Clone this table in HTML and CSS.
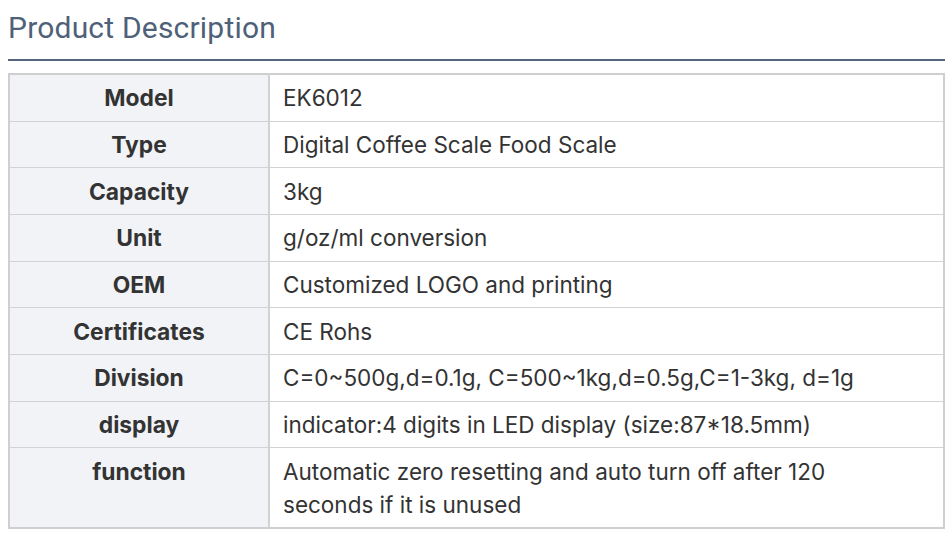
FILE: index.html
```html
<!DOCTYPE html>
<html>
<head>
<meta charset="utf-8">
<link rel="stylesheet" href="styles.css">
</head>
<body>
<div class="wrap">
  <h2 class="title">Product Description</h2>
  <table class="spec">
    <tr><th>Model</th><td>EK6012</td></tr>
    <tr><th>Type</th><td>Digital Coffee Scale Food Scale</td></tr>
    <tr><th>Capacity</th><td>3kg</td></tr>
    <tr><th>Unit</th><td>g/oz/ml conversion</td></tr>
    <tr><th>OEM</th><td>Customized LOGO and printing</td></tr>
    <tr><th>Certificates</th><td>CE Rohs</td></tr>
    <tr><th>Division</th><td>C=0~500g,d=0.1g, C=500~1kg,d=0.5g,C=1-3kg, d=1g</td></tr>
    <tr><th>display</th><td>indicator:4 digits in LED display (size:87*18.5mm)</td></tr>
    <tr><th>function</th><td>Automatic zero resetting and auto turn off after 120<br>seconds if it is unused</td></tr>
  </table>
</div>
</body>
</html>
```
FILE: styles.css
```css
html, body { margin: 0; padding: 0; background: #fff; }
body { font-family: Inter, "Noto Sans", sans-serif; }
.wrap { margin: 0 7px 0 8px; padding-top: 10px; }
.title {
  margin: 0;
  font-family: Roboto, Inter, sans-serif;
  font-weight: 400;
  font-size: 30px;
  letter-spacing: 0.2px;
  line-height: 36px;
  color: #4f6178;
  padding-bottom: 13px;
  border-bottom: 2px solid #56667e;
}
.spec {
  margin-top: 12px;
  width: 100%;
  border-collapse: collapse;
  border: 2px solid #cfcfcf;
  font-size: 22.5px;
  line-height: 33px;
  color: #333;
}
.spec th, .spec td {
  border-top: 1px solid #d2d2d2;
  padding: 6.33px 13px;
  vertical-align: top;
}
.spec th {
  width: 230px;
  padding: 6.33px 14px;
  background: #f2f3f7;
  font-size: 22.8px;
  font-weight: 700;
  text-align: center;
  border-right: 2px solid #d2d2d2;
}
.spec td { text-align: left; }
```
